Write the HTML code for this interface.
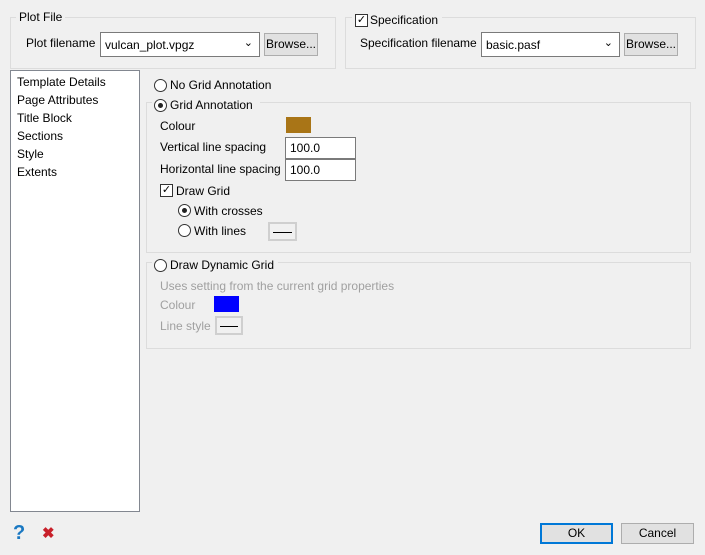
<!DOCTYPE html><html><head><style>
body{margin:0;width:705px;height:555px;background:#f0f0f0;font-family:"Liberation Sans",sans-serif;font-size:12px;color:#000;position:relative;overflow:hidden}
.a{position:absolute;white-space:nowrap}
.g{position:absolute;border:1px solid #dcdcdc}
.in{position:absolute;background:#fff;border:1px solid #7a7a7a;box-sizing:border-box;padding:3px 4px}
.btn{position:absolute;background:#e1e1e1;border:1px solid #adadad;box-sizing:border-box;text-align:center;line-height:20px}
.r{position:absolute;width:11px;height:11px;border:1px solid #333;border-radius:50%;background:#fff}
.r.on::after{content:"";position:absolute;left:3px;top:3px;width:5px;height:5px;border-radius:50%;background:#222}
.cb{position:absolute;width:11px;height:11px;border:1px solid #333;background:#fff;font-size:11px;line-height:11px;text-align:center}
.gr{color:#a0a0a0}
.ls{position:absolute;border:2px solid #cfcfcf;background:#f0f0f0;box-sizing:border-box}
.ls::after{content:"";position:absolute;left:3px;right:3px;top:50%;border-top:1px solid #000}
</style></head><body>
<div class="g" style="left:10px;top:17px;width:324px;height:50px"></div>
<div class="a" style="left:16px;top:10px;background:#f0f0f0;padding:0 3px">Plot File</div>
<div class="a" style="left:26px;top:36px">Plot filename</div>
<div class="in" style="left:100px;top:32px;width:160px;height:25px;padding-top:5px">vulcan_plot.vpgz<span style="position:absolute;right:6px;top:3px;font-size:11px">&#8964;</span></div>
<div class="btn" style="left:264px;top:33px;width:54px;height:23px">Browse...</div>

<div class="g" style="left:345px;top:17px;width:349px;height:50px"></div>
<div class="a" style="left:352px;top:10px;background:#f0f0f0;width:90px;height:16px"></div>
<div class="cb" style="left:355px;top:14px">&#10003;</div>
<div class="a" style="left:370px;top:13px">Specification</div>
<div class="a" style="left:360px;top:36px">Specification filename</div>
<div class="in" style="left:481px;top:32px;width:139px;height:25px;padding-top:5px">basic.pasf<span style="position:absolute;right:6px;top:3px;font-size:11px">&#8964;</span></div>
<div class="btn" style="left:624px;top:33px;width:54px;height:23px">Browse...</div>

<div class="a" style="left:10px;top:70px;width:128px;height:440px;background:#fff;border:1px solid #828790"></div>
<div class="a" style="left:17px;top:73px;line-height:18px">Template Details<br>Page Attributes<br>Title Block<br>Sections<br>Style<br>Extents</div>

<div class="r" style="left:154px;top:79px"></div>
<div class="a" style="left:170px;top:78px">No Grid Annotation</div>
<div class="g" style="left:146px;top:102px;width:543px;height:149px"></div>
<div class="a" style="left:152px;top:97px;width:108px;height:14px;background:#f0f0f0"></div>
<div class="r on" style="left:154px;top:99px"></div>
<div class="a" style="left:170px;top:98px">Grid Annotation</div>
<div class="a" style="left:160px;top:119px">Colour</div>
<div class="a" style="left:286px;top:117px;width:25px;height:16px;background:#a97517"></div>
<div class="a" style="left:160px;top:140px">Vertical line spacing</div>
<div class="in" style="left:285px;top:137px;width:71px;height:22px">100.0</div>
<div class="a" style="left:160px;top:162px">Horizontal line spacing</div>
<div class="in" style="left:285px;top:159px;width:71px;height:22px">100.0</div>
<div class="cb" style="left:160px;top:184px">&#10003;</div>
<div class="a" style="left:176px;top:184px">Draw Grid</div>
<div class="r on" style="left:178px;top:204px"></div>
<div class="a" style="left:194px;top:204px">With crosses</div>
<div class="r" style="left:178px;top:224px"></div>
<div class="a" style="left:194px;top:224px">With lines</div>
<div class="ls" style="left:268px;top:222px;width:29px;height:19px"></div>

<div class="g" style="left:146px;top:262px;width:543px;height:85px"></div>
<div class="a" style="left:152px;top:257px;width:126px;height:14px;background:#f0f0f0"></div>
<div class="r" style="left:154px;top:259px"></div>
<div class="a" style="left:170px;top:258px">Draw Dynamic Grid</div>
<div class="a gr" style="left:160px;top:279px">Uses setting from the current grid properties</div>
<div class="a gr" style="left:160px;top:298px">Colour</div>
<div class="a" style="left:214px;top:296px;width:25px;height:16px;background:#0000ff"></div>
<div class="a gr" style="left:160px;top:319px">Line style</div>
<div class="ls" style="left:215px;top:316px;width:28px;height:19px"></div>

<div class="a" style="left:13px;top:522px;font-size:20px;font-weight:bold;color:#1a78c2">?</div>
<div class="a" style="left:42px;top:524px;font-size:15px;font-weight:bold;color:#c8202a">&#10006;</div>
<div class="btn" style="left:540px;top:523px;width:73px;height:21px;border:2px solid #0078d7;line-height:17px">OK</div>
<div class="btn" style="left:621px;top:523px;width:73px;height:21px;line-height:19px">Cancel</div>
</body></html>
